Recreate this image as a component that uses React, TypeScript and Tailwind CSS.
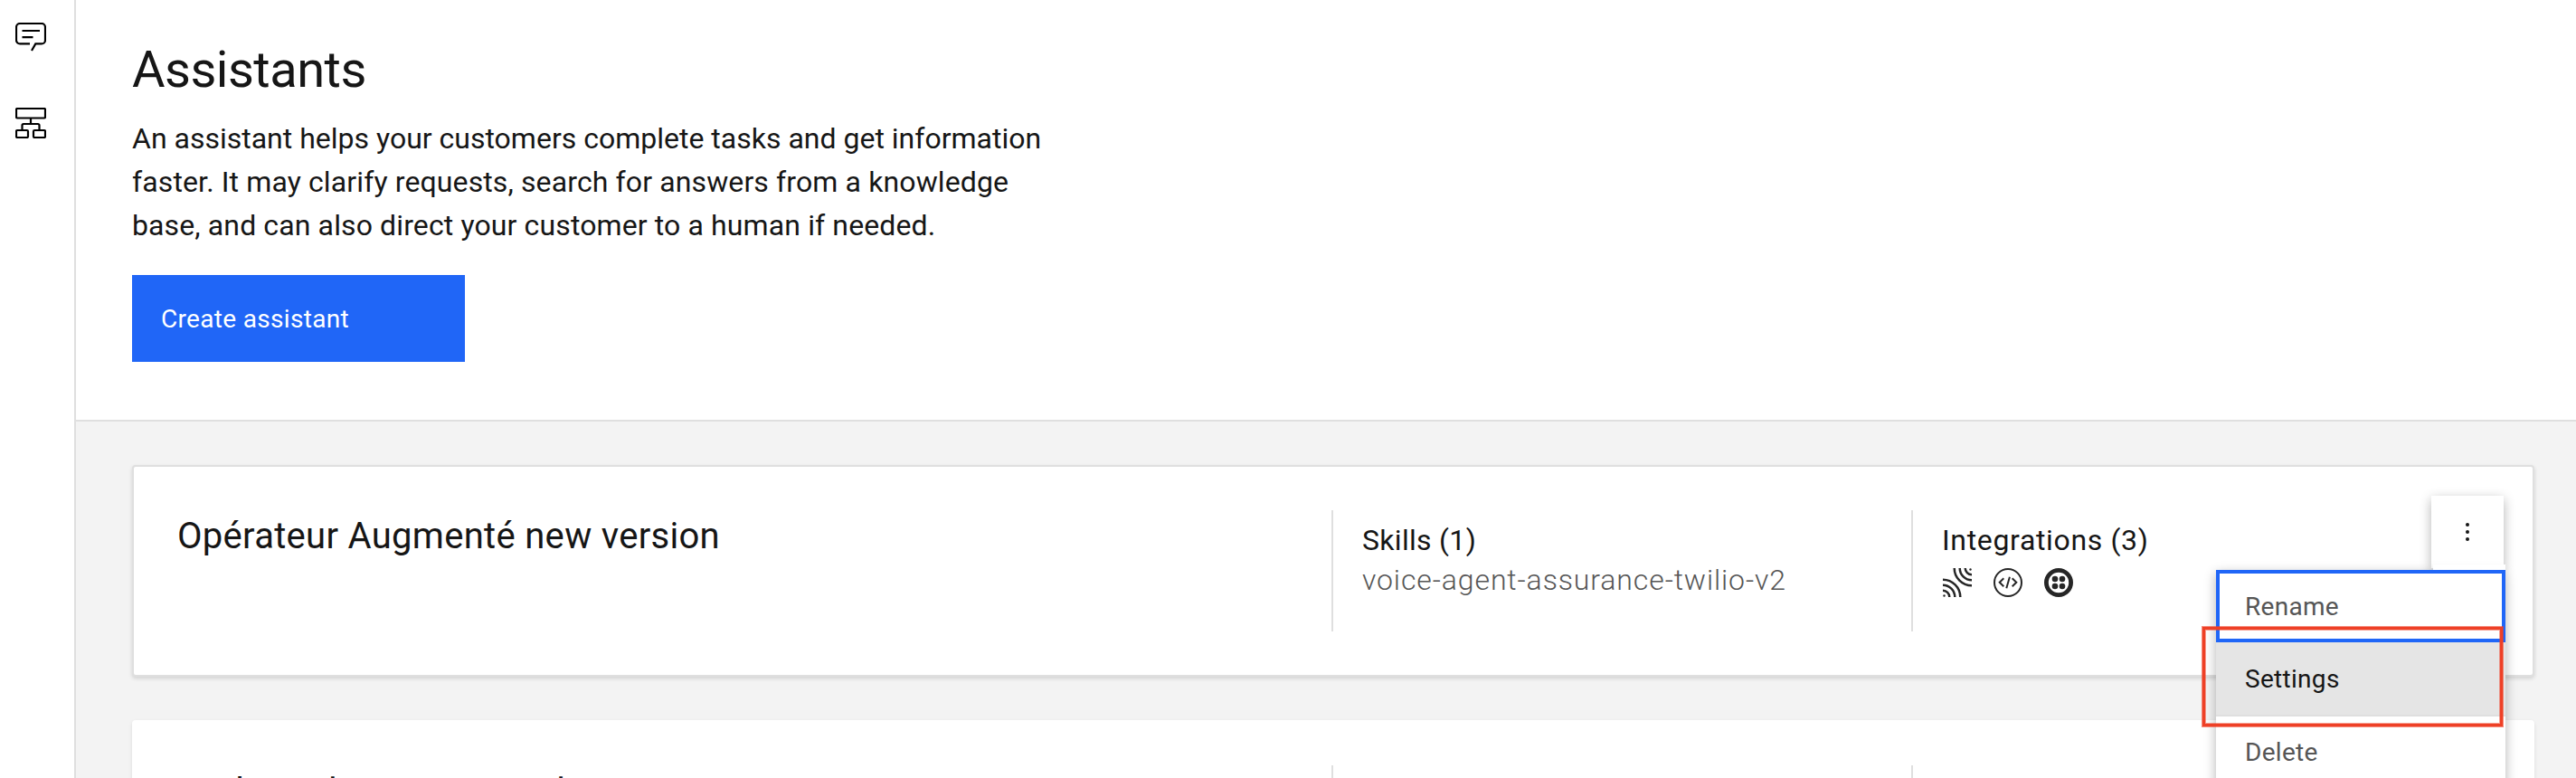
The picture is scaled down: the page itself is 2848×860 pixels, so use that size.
import type { ReactNode } from "react";

function ChatIcon() {
  return (
    <svg width="34" height="32" viewBox="0 0 34 32" fill="none" stroke="#000" strokeWidth="2.2">
      <path d="M16 23.400H5A4 4 0 0 1 1 19.400V5A4 4 0 0 1 5 1H29A4 4 0 0 1 33 5V19.400A4 4 0 0 1 29 23.400H22.300L18 31" />
      <path d="M7.500 9H27M7.500 16.200H19.500" />
    </svg>
  );
}

function FlowIcon() {
  return (
    <svg width="34" height="34" viewBox="0 0 34 34" fill="none" stroke="#000" strokeWidth="2.2">
      <rect x="1" y="1" width="32" height="10.500" rx="1.200" />
      <rect x="1" y="25" width="13" height="8" rx="1.200" />
      <rect x="20" y="25" width="13" height="8" rx="1.200" />
      <path d="M17 11.500V18M7.500 25V19.500A1.500 1.500 0 0 1 9 18H25A1.500 1.500 0 0 1 26.500 19.500V25" />
    </svg>
  );
}

function WavesIcon() {
  return (
    <svg width="32" height="32" viewBox="0 0 32 32" fill="none" stroke="#262626" strokeWidth="2.500">
      <circle cx="1.500" cy="30.500" r="1.200" fill="#262626" stroke="none" />
      <circle cx="0" cy="32" r="7.300" />
      <circle cx="0" cy="32" r="13.300" />
      <circle cx="0" cy="32" r="19.300" />
      <circle cx="30.500" cy="1.500" r="1.200" fill="#262626" stroke="none" />
      <circle cx="32" cy="0" r="7.300" />
      <circle cx="32" cy="0" r="13.300" />
      <circle cx="32" cy="0" r="19.300" />
    </svg>
  );
}

function CodeIcon() {
  return (
    <svg width="32" height="32" viewBox="0 0 32 32" fill="none" stroke="#262626" strokeWidth="2">
      <circle cx="16" cy="16" r="15" />
      <path d="M11.300 11.300L6.700 15.800L11.300 20.300M20.700 11.300L25.300 15.800L20.700 20.300M17.900 9.700L14.300 22.300" />
    </svg>
  );
}

function DialIcon() {
  return (
    <svg width="32" height="32" viewBox="0 0 32 32" fill="#262626">
      <circle cx="16" cy="16" r="13.600" fill="none" stroke="#262626" strokeWidth="4.800" />
      <circle cx="12" cy="12" r="3.300" />
      <circle cx="20" cy="12" r="3.300" />
      <circle cx="12" cy="20" r="3.300" />
      <circle cx="20" cy="20" r="3.300" />
    </svg>
  );
}

function Section({ title, children }: { title?: ReactNode; children?: ReactNode }) {
  return (
    <div className="flex h-[134px] flex-col border-l-2 border-[#dfdfdf] pl-8 pt-[11px]">
      <div className="h-11 whitespace-nowrap text-[32px] leading-[44px]">{title}</div>
      {children}
    </div>
  );
}

function OverflowMenu() {
  return (
    <>
      <button className="absolute right-8 top-8 flex h-20 w-20 items-center justify-center bg-white shadow-[0_4px_12px_rgba(0,0,0,0.3)]">
        <svg width="4" height="20" viewBox="0 0 4 20" fill="#161616">
          <circle cx="2" cy="2" r="2" />
          <circle cx="2" cy="10" r="2" />
          <circle cx="2" cy="18" r="2" />
        </svg>
      </button>
      <div className="absolute left-[2302px] top-[114px] z-10 flex h-[244px] w-[320px] flex-col bg-white text-[28px] leading-[36px] tracking-[0.3px] text-[#565656] shadow-[0_4px_12px_rgba(0,0,0,0.3)]">
        <div className="flex h-20 items-center border-4 border-[#2066f7] pl-7 pt-[2px]">Rename</div>
        <div className="flex h-[82px] items-center border-b-2 border-[#dfdfdf] bg-[#e5e5e5] pl-8 pt-[2px] text-[#161616]">Settings</div>
        <div className="flex h-20 items-center pl-8">Delete</div>
      </div>
      <div className="absolute right-[30px] top-[108px] z-10 h-[6px] w-20 bg-white" />
      <div className="absolute left-[2287px] top-[177px] z-20 h-[110px] w-[332px] border-[3px] border-[#ee4026] shadow-[0_0_0_1px_rgba(238,64,38,0.6),inset_0_0_0_1px_rgba(238,64,38,0.5)]" />
    </>
  );
}

export default function App() {
  return (
    <div className="flex h-[860px] w-[2848px] overflow-hidden bg-white font-['Roboto','Noto_Sans',sans-serif] text-[#161616]">
      <aside className="flex w-[84px] shrink-0 flex-col gap-[62px] border-r-2 border-[#dfdfdf] pl-[17px] pt-[25px]">
        <ChatIcon />
        <FlowIcon />
      </aside>
      <main className="flex min-w-0 flex-1 flex-col">
        <header className="flex h-[466px] shrink-0 flex-col items-start border-b-2 border-[#dfdfdf] pl-[62px] pt-[41px]">
          <h1 className="h-[88px] text-[56px] leading-[72px] tracking-[-0.5px]">Assistants</h1>
          <div className="whitespace-nowrap text-[32px] leading-[48px]">
            <p>An assistant helps your customers complete tasks and get information</p>
            <p className="tracking-[0.12px]">faster. It may clarify requests, search for answers from a knowledge</p>
            <p className="tracking-[0.12px]">base, and can also direct your customer to a human if needed.</p>
          </div>
          <button className="mt-[31px] flex h-24 w-[368px] items-center bg-[#2066f7] pl-8 pt-[2px] text-[28px] tracking-[0.32px] text-white">
            Create assistant
          </button>
        </header>
        <div className="flex flex-1 flex-col gap-12 bg-[#f3f3f3] pl-[62px] pr-[46px] pt-12">
          <section className="relative z-10 grid h-[234px] shrink-0 grid-cols-[1324px_641px_1fr] rounded-[4px] border-2 border-[#dfdfdf] bg-white pt-12 shadow-[0_2px_4px_rgba(0,0,0,0.14)]">
            <h2 className="pl-12 pt-px text-[40px] leading-[56px] tracking-[0.3px]">Opérateur Augmenté new version</h2>
            <Section title={<span className="tracking-[0.3px]">Skills (1)</span>}>
              <div className="text-[32px] font-light leading-[44px] tracking-[0.88px] text-[#565656]">voice-agent-assurance-twilio-v2</div>
            </Section>
            <Section title={<span className="tracking-[0.65px]">Integrations (3)</span>}>
              <div className="ml-px flex gap-6 pt-[9px]">
                <WavesIcon />
                <CodeIcon />
                <DialIcon />
              </div>
            </Section>
            <OverflowMenu />
          </section>
          <section className="grid h-[234px] shrink-0 grid-cols-[1326px_641px_1fr] rounded-[4px] bg-white pt-[50px] shadow-[0_2px_4px_rgba(0,0,0,0.1)]">
            <h2 className="pl-[50px] pt-[2px] text-[40px] leading-[56px] tracking-[0.1px]">Tech markers Scenario k</h2>
            <Section />
            <Section />
          </section>
        </div>
      </main>
    </div>
  );
}
